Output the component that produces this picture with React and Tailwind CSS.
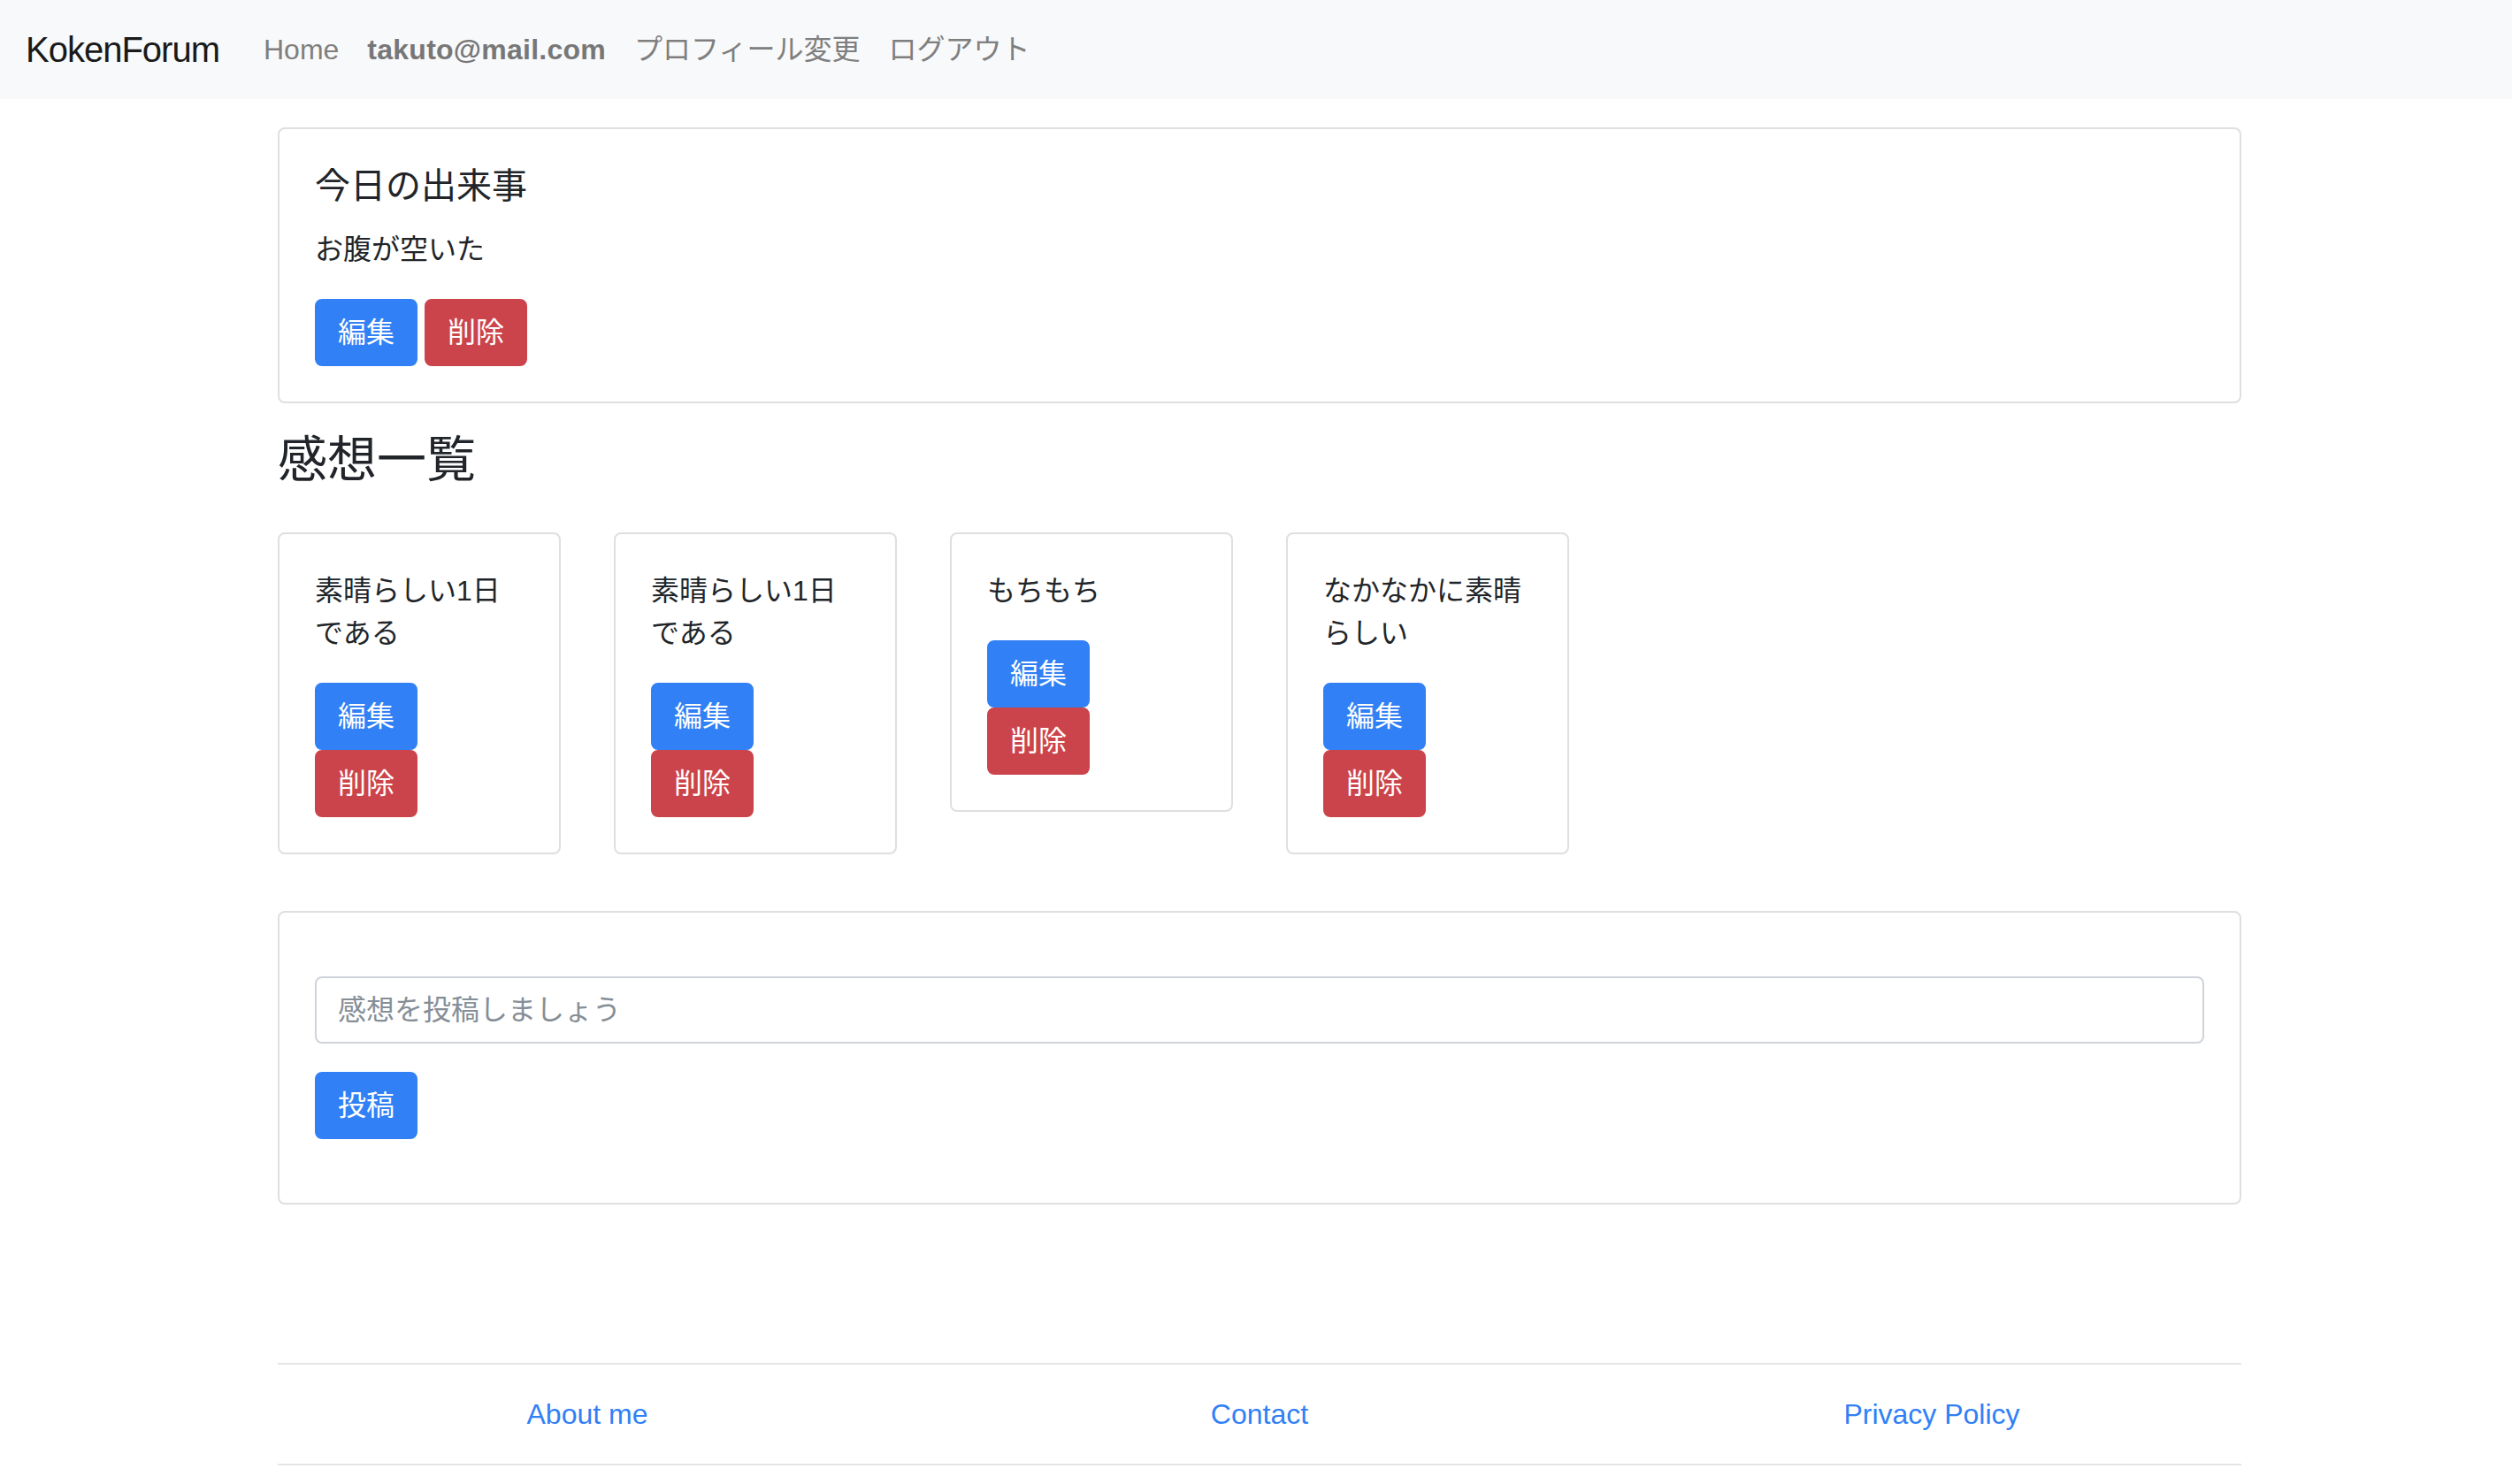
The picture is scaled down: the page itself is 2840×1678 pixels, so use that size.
import React from 'react';

const navLinks = ['Home', 'takuto@mail.com', 'プロフィール変更', 'ログアウト'];

const impressions = [
    '素晴らしい1日である',
    '素晴らしい1日である',
    'もちもち',
    'なかなかに素晴らしい',
];

const Button = ({ tone, children }) => (
    <button
        className={`h-[76px] w-[116px] shrink-0 rounded-[8px] border-2 px-[24px] text-[32px] leading-[48px] text-white ${
            tone === 'danger' ? 'border-[#cc444b] bg-[#cc444b]' : 'border-[#3180f6] bg-[#3180f6]'
        }`}
    >
        {children}
    </button>
);

const Card = ({ className = '', children }) => (
    <div className={`rounded-[8px] border-2 border-[#dfdfdf] bg-white p-[40px] ${className}`}>
        {children}
    </div>
);

export default function App() {
    return (
        <div className="min-h-screen bg-white font-['Liberation_Sans','Noto_Sans_CJK_JP',sans-serif] text-[32px] leading-[48px] text-[#212529]">
            {/* Navbar */}
            <nav className="flex h-[112px] items-center bg-[#f8f9fa] pl-[29px] pr-[32px]">
                <a className="mr-[34px] text-[40px] leading-[60px] tracking-[-1px] text-[#1a1a1a]">KokenForum</a>
                <div className="flex items-center">
                    {navLinks.map((link, i) =>
                        i === 1 ? (
                            <strong key={link} className="px-[16px] font-bold tracking-[0.25px] text-[#777777]">
                                {link}
                            </strong>
                        ) : (
                            <a key={link} className="px-[16px] text-[#7f7f7f]">
                                {link}
                            </a>
                        )
                    )}
                </div>
            </nav>

            <main className="ml-[314px] w-[2220px]">
                {/* Today's event */}
                <Card className="mt-[32px]">
                    <h5 className="mb-[24px] text-[40px] leading-[48px]">今日の出来事</h5>
                    <p className="mb-[32px]">お腹が空いた</p>
                    <div className="flex gap-[8px]">
                        <Button>編集</Button>
                        <Button tone="danger">削除</Button>
                    </div>
                </Card>

                <h3 className="mt-[30px] text-[56px] leading-[67px]">感想一覧</h3>

                {/* Impression cards */}
                <div className="mt-[49px] flex items-start gap-[60px]">
                    {impressions.map((text, i) => (
                        <Card key={i} className="w-[320px]">
                            <p className="mb-[32px]">{text}</p>
                            <div className="flex flex-wrap gap-x-[8px]">
                                <Button>編集</Button>
                                <Button tone="danger">削除</Button>
                            </div>
                        </Card>
                    ))}
                </div>

                {/* Post form */}
                <Card className="mt-[64px]">
                    <form className="py-[32px]" onSubmit={(e) => e.preventDefault()}>
                        <input
                            type="text"
                            placeholder="感想を投稿しましょう"
                            className="mb-[32px] block h-[76px] w-full rounded-[8px] border-2 border-[#ced4da] px-[24px] text-[32px] text-[#495057] outline-none placeholder:text-[#868e96]"
                        />
                        <Button>投稿</Button>
                    </form>
                </Card>

                {/* Footer */}
                <footer className="mt-[179px] border-y-2 border-[#e5e5e5] py-[32px]">
                    <div className="-mx-[30px] flex">
                        {['About me', 'Contact', 'Privacy Policy'].map((label) => (
                            <div key={label} className="flex-1 text-center">
                                <a className="text-[#3180f6]">{label}</a>
                            </div>
                        ))}
                    </div>
                </footer>
            </main>
        </div>
    );
}
